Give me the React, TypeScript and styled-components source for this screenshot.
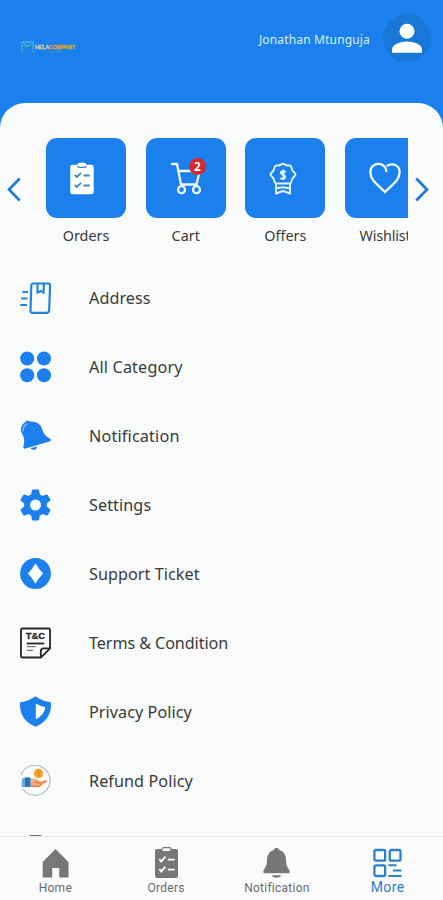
import React from "react";
import styled, { createGlobalStyle } from "styled-components";

const BLUE = "#1b7fee";
const PAPER = "#f9fafa";

const GlobalStyle = createGlobalStyle`
  * { box-sizing: border-box; }
  body { margin: 0; background: ${PAPER}; }
`;

const Screen = styled.div`
  width: 443px;
  height: 900px;
  overflow: hidden;
  display: flex;
  flex-direction: column;
  background: ${BLUE};
  font-family: "Noto Sans", "Open Sans", sans-serif;
  color: #3a3a3a;
`;

const Header = styled.header`
  height: 103px;
  flex: none;
  display: flex;
  align-items: flex-start;
  justify-content: space-between;
  padding: 14px 12px 0 21px;
`;

const Brand = styled.div`
  display: flex;
  align-items: center;
  gap: 1px;
  margin-top: 27px;
`;

const BrandText = styled.div`
  display: flex;
  flex-direction: column;
  align-items: center;
  gap: 1px;
  padding-top: 2px;
  font-family: "Liberation Sans", sans-serif;
  line-height: 1;
`;

const BrandName = styled.span`
  font-size: 5.4px;
  font-weight: 700;
  color: #dba52c;
  -webkit-text-stroke: 0.3px currentColor;
  letter-spacing: -0.16px;
  height: 5px;
  em { font-style: normal; color: #cfcf9f; }
`;

const BrandSub = styled.span`
  font-size: 3px;
  height: 3px;
  color: #4f96a0;
  letter-spacing: 0.9px;
`;

const User = styled.div`
  display: flex;
  align-items: flex-start;
  gap: 13px;
`;

const UserName = styled.span`
  margin-top: 17px;
  font-size: 12px;
  line-height: 17px;
  letter-spacing: 0.16px;
  color: #d9f0fd;
  white-space: nowrap;
`;

const Avatar = styled.div`
  width: 48px;
  height: 48px;
  border-radius: 50%;
  background: #1977d7;
  display: grid;
  place-items: center;
`;

const Sheet = styled.main`
  flex: 1;
  min-height: 0;
  overflow: hidden;
  border-radius: 25px 25px 0 0;
  background: ${PAPER};
  display: flex;
  flex-direction: column;
`;

const Carousel = styled.section`
  flex: none;
  display: flex;
  align-items: flex-start;
  padding: 35px 0 0 7px;
  height: 160px;
`;

const ArrowButton = styled.button`
  border: 0;
  padding: 0;
  background: none;
  width: 14px;
  height: 25px;
  margin-top: 39px;
  flex: none;
`;

const Track = styled.div`
  width: 362px;
  margin: 0 7px 0 25px;
  overflow: hidden;
  display: flex;
  gap: 19.7px;
`;

const TileItem = styled.div`
  flex: none;
  width: 80px;
  display: flex;
  flex-direction: column;
  align-items: center;
`;

const Tile = styled.div<{ $iconInset?: number }>`
  position: relative;
  width: 80px;
  height: 80px;
  border-radius: 11px;
  background: ${BLUE};
  display: grid;
  place-items: center;
  padding-right: ${(p) => p.$iconInset ?? 0}px;
`;

const Badge = styled.span`
  position: absolute;
  top: 20px;
  left: 43px;
  width: 17px;
  height: 17px;
  border-radius: 50%;
  background: #d9282c;
  color: #fff;
  font-size: 11.5px;
  font-weight: 700;
  line-height: 17px;
  text-align: center;
`;

const TileLabel = styled.span<{ $spacing?: number }>`
  margin-top: 8px;
  font-size: 14.4px;
  line-height: 20px;
  letter-spacing: ${(p) => p.$spacing ?? 0}px;
  white-space: nowrap;
`;

const Menu = styled.ul`
  list-style: none;
  margin: 0;
  padding: 0;
`;

const MenuRow = styled.li`
  height: 69px;
  padding-left: 20px;
  display: flex;
  align-items: center;
  gap: 38px;
`;

const MenuLabel = styled.span<{ $spacing: number }>`
  margin-top: 1px;
  font-size: 16.2px;
  line-height: 22px;
  letter-spacing: ${(p) => p.$spacing}px;
  white-space: nowrap;
`;

const NextRow = styled.li`
  height: 30px;
  padding: 20px 0 0 29px;
`;

const NextIconTop = styled.div`
  width: 13px;
  height: 12px;
  border-radius: 2px 2px 0 0;
  background: #6f7173;
`;

const BottomNav = styled.nav`
  flex: none;
  height: 64px;
  background: #fbfbfb;
  border-top: 1px solid #eaebeb;
  display: grid;
  grid-template-columns: repeat(4, 1fr);
  font-family: Roboto, sans-serif;
`;

const NavItem = styled.div<{ $active?: boolean }>`
  display: flex;
  flex-direction: column;
  align-items: center;
  padding-top: 10px;
  color: ${(p) => (p.$active ? "#2b80cf" : "#777")};
`;

const NavLabel = styled.span<{ $active?: boolean }>`
  font-size: ${(p) => (p.$active ? 14 : 12)}px;
  line-height: 16px;
  letter-spacing: ${(p) => (p.$active ? 0.35 : 0.25)}px;
  margin-top: ${(p) => (p.$active ? 1 : 2)}px;
  color: ${(p) => (p.$active ? "#2b80cf" : "#6a6a6a")};
`;

const Icon = styled.svg`
  display: block;
  flex: none;
`;

const Chevron = ({ flip }: { flip?: boolean }) => (
  <Icon width="14" height="25" viewBox="0 0 14 25" fill="none" stroke="#1a78d6" strokeWidth="2.6">
    <path d={flip ? "M1.300 1.500 12 12.500 1.300 23.500" : "M12.700 1.500 2 12.500 12.700 23.500"} />
  </Icon>
);

const BrandMark = () => (
  <Icon width="13" height="14" viewBox="0 0 13 14" fill="none">
    <path d="M1 13V1.200h11V12" stroke="#50b7da" strokeWidth="1.200" />
    <path d="M1.200 8v5M3 3.500 6.500 7.500 10.500 3.300M4.500 9v2.500M11.700 8v4.500" stroke="#3397aa" strokeWidth="1.200" />
    <path d="M3.200 2.800c2 2.800 4.400 2.800 6.600 0" stroke="#66c5e4" strokeWidth="1" />
  </Icon>
);

const PersonIcon = () => (
  <Icon width="30" height="30" viewBox="0 0 30 30" fill="#fff">
    <circle cx="15" cy="8.200" r="7.500" />
    <path d="M0 29.700v-3.200c0-5.200 8.500-8 15-8s15 2.800 15 8v3.200z" />
  </Icon>
);

const ClipboardIcon = ({ color, mark }: { color: string; mark: string }) => (
  <Icon width="24" height="33" viewBox="0 0 24 33">
    <path d="M2.500 2.800h5Q8 .8 10 .8h4q2 0 2.500 2h5Q23.700 2.800 23.700 5v25q0 2.300-2.200 2.300h-19Q.3 32.300.3 30V5q0-2.200 2.200-2.200z" fill={color} />
    <path d="M7.600 4q.5 1.300 1.800 1.300h5.200q1.300 0 1.800-1.300" fill="none" stroke={mark} strokeWidth="1.300" />
    <path d="m4.800 13 2 2 4.300-4.200M4.800 23l2 2 4.300-4.200M13.500 13.500h6.300M13.500 23.500h6.300" fill="none" stroke={mark} strokeWidth="1.800" />
  </Icon>
);

const NavClipboardIcon = () => (
  <Icon width="23" height="31" viewBox="0 0 23 31">
    <rect y="2" width="23" height="29" rx="2" fill="#777" />
    <rect x="7" y=".6" width="9" height="4" rx="1.500" fill="#fbfbfb" stroke="#777" strokeWidth="1.200" />
    <path d="m4.300 12 2 2.500 4-4.800M4.300 22l2 2.500 4-4.800M12.800 12.600h6.800M12.800 22.600h6.800" fill="none" stroke="#fff" strokeWidth="1.900" />
  </Icon>
);

const CartIcon = () => (
  <Icon width="32" height="33" viewBox="0 0 32 33" fill="none" stroke="#eefaff" strokeWidth="2.300" strokeLinejoin="round">
    <path d="M1 2h6l4 20.500h15.500l3.200-13.500H8.500" />
    <circle cx="11.500" cy="27.700" r="3.500" />
    <circle cx="26.500" cy="27.700" r="3.500" />
  </Icon>
);

const OfferIcon = () => (
  <Icon width="28" height="33" viewBox="0 0 28 33" fill="none" stroke="#e4f5ff" strokeWidth="1.900" strokeLinejoin="round">
    <path d="M7.500 3.500q3 .3 5-1.300 1.500-1 3 0 2 1.600 5 1.300 1.800.2 2 2.200.2 2.800 3.200 5.300 1.500 1.500 0 3-3 2.500-3.200 5.300-.2 2-2 2.200h-13q-1.800-.2-2-2.200Q5.300 16.500 2.300 14q-1.500-1.500 0-3 3-2.500 3.200-5.300.2-2 2-2.200z" />
    <path d="M7 22v9.500l7-2.500 7 2.500V22M7.500 26.300l6.500-1 6.500 1" />
    <path d="M17 10q-3-1.500-5 0c-1.500 2.500 4.700 2.500 4.300 5.200-1 2.300-3.600 2-5 .6M14.500 7.500v10.500" strokeWidth="1.900" />
  </Icon>
);

const HeartIcon = () => (
  <Icon width="32" height="32" viewBox="0 0 32 32" fill="none" stroke="#f0faff" strokeWidth="2.300" strokeLinecap="round">
    <path d="M17.300 9.200C17.200 6.800 15.800 4.200 13.500 2.900 8 .2 1.400 3.500 1.400 10.200 1.400 18 8 22 16 30 24 22 30.600 18 30.600 10.200 30.600 3.500 24.500.5 18.500 3.500" />
  </Icon>
);

const AddressIcon = () => (
  <Icon width="31" height="32" viewBox="0 0 31 32" fill="none" stroke="#2484d9" strokeWidth="2.200">
    <path d="M13.500 1.500h14.800q2 0 1.800 2l-1 25q-.2 2.300-2.300 2.300H12.500q-2.200 0-2-2.300l.8-25q.1-2 2.200-2z" />
    <path d="M17.500 2v8.500l3.300-1.600 2.700 1.600.4-8.500M2.500 10H8M1 16.500h6.500M.3 23H7" />
  </Icon>
);

const CategoryIcon = () => (
  <Icon width="31" height="32" viewBox="0 0 31 32" fill={BLUE}>
    <circle cx="7.200" cy="7.500" r="7" />
    <circle cx="24" cy="7.500" r="7" />
    <circle cx="7.200" cy="24.300" r="7" />
    <circle cx="24" cy="24.300" r="7" />
  </Icon>
);

const TiltedBellIcon = () => (
  <Icon width="31" height="31" viewBox="0 0 31 31" fill={BLUE}>
    <path d="M5.500 2Q6.500-.6 9.300 1.500q9.500-1 12.700 7c1 4.500 3 7.500 8.500 10.500.8 1.200.4 2-1 2.500L5.400 28.500c-1.800.4-2.200-.3-2-2 1.800-7 .4-9.800-1.600-13Q-1 6 5.500 2z" />
    <path d="M10.500 28.300 17 26.400q-.2 3-3 3.300-2.500.3-3.500-1.400z" />
    <path d="M3.200 11.500Q2.500 5.700 7.800 3.600" fill="none" stroke="#87beee" strokeWidth="1.200" />
  </Icon>
);

const GearIcon = () => (
  <Icon width="31" height="32" viewBox="0 0 31 32">
    <g fill={BLUE}>
      <circle cx="15.500" cy="16" r="11.300" />
      {[0, 60, 120, 180, 240, 300].map((angle) => (
        <path key={angle} d="M10.800 7 12 1.200q.2-.8 1-.8h5q.8 0 1 .8L20.200 7z" transform={`rotate(${angle} 15.500 16)`} />
      ))}
    </g>
    <circle cx="15.500" cy="16" r="5.500" fill={PAPER} />
  </Icon>
);

const SupportIcon = () => (
  <Icon width="31" height="31" viewBox="0 0 31 31">
    <circle cx="15.500" cy="15.500" r="15.400" fill={BLUE} />
    <path d="M15.500 5.800Q18 10.500 22.700 15.500 18 20.500 15.500 25.200 13 20.500 8.300 15.500 13 10.500 15.500 5.800z" fill="#fff" stroke="#fff" strokeWidth=".6" />
  </Icon>
);

const TermsIcon = () => (
  <Icon width="31" height="32" viewBox="0 0 32 32" fill="none" stroke="#292929" strokeWidth="1.900" strokeLinejoin="round">
    <path d="M2.500 1h27Q31 1 31 2.500V21.500L21.500 31h-19Q1 31 1 29.500v-27Q1 1 2.500 1zM31 21.500h-6.500q-3 0-3 3V31" />
    <path d="M7 16.500h18" />
    <path d="M7 19.800h9M7 23.500h6.500" stroke="#777" strokeWidth="1.300" />
    <text x="16" y="12.300" textAnchor="middle" textLength="20" lengthAdjust="spacingAndGlyphs" fontFamily="Liberation Sans, sans-serif" fontSize="9.200" fontWeight="700" fill="#292929" stroke="#292929" strokeWidth=".3">T&amp;C</text>
  </Icon>
);

const ShieldIcon = () => (
  <Icon width="31" height="31" viewBox="0 0 31 31">
    <path d="M15.500.3Q22 5.200 30.800 6.300 32.500 23.500 15.500 30.800-1.500 23.500.2 6.300 9 5.200 15.500.3z" fill={BLUE} />
    <path d="M15.800 7.500q4.500 2.500 9.500 3.800-1 8-9.500 12z" fill="#fff" />
  </Icon>
);

const RefundIcon = () => (
  <Icon width="31" height="32" viewBox="0 0 31 32">
    <path d="M1 10A15 15 0 1 1 2.500 23.500" fill="none" stroke="#b5bcc5" strokeWidth="1.200" />
    <circle cx="18.500" cy="8.500" r="4.700" fill="#f7a329" />
    <path d="M18.500 5.500v6M17 7h3" stroke="#d88518" strokeWidth="1" />
    <path d="M10.500 13.500h5l4 2.300q2 .2 2.300 1.300l4.500-1.700q1.800.2.700 1.700L18.500 21.800h-8z" fill="#f4ae82" />
    <path d="m15 17.300 5.500.8 5.800-2.300M11 21.300h7.500l3.500-2" fill="none" stroke="#e77f43" strokeWidth="1.500" />
    <path d="M5 12.500h5.500v9.500H4.500z" fill="#2675b9" />
    <path d="M2 14q2-2 3-1.500V22H1.500z" fill="#69a9dc" />
  </Icon>
);

const HomeIcon = () => (
  <Icon width="27" height="31" viewBox="0 0 27 31">
    <path d="M13.500 2 26.500 15v15.500h-9.300V21h-7v9.500H.7V15z" fill="#777" />
  </Icon>
);

const BellIcon = () => (
  <Icon width="27" height="31" viewBox="0 0 27 31" fill="#777">
    <path d="M11 2.800Q11.500.8 13.500.8q2 0 2.500 2 7 2.200 7 10 0 6.500 2.800 9.400 1 1.500.9 2.800-.2 1.200-1.400 1.200H1.700Q.5 26.200.3 25q-.1-1.300.9-2.800Q4 19.300 4 12.800 4 5 11 2.800z" />
    <path d="M8.500 28.200h10q-1.500 2.500-5 2.500t-5-2.500z" />
  </Icon>
);

const MoreIcon = () => (
  <Icon width="29" height="31" viewBox="0 0 29 31" fill="none" stroke="#2b80cf" strokeWidth="2.300">
    <rect x="1.400" y="3" width="10.700" height="10.700" rx="1.500" />
    <rect x="16.800" y="3" width="10.700" height="10.700" rx="1.500" />
    <rect x="1.400" y="18.300" width="10.700" height="10.700" rx="1.500" />
    <path d="M15.500 18.300h8M20 23.500h8.500M15.500 29h13" strokeWidth="2" />
  </Icon>
);

const tiles = [
  { label: "Orders", icon: <ClipboardIcon color="#fff" mark="#3f87b5" />, inset: 8 },
  { label: "Cart", icon: <CartIcon />, badge: 2 },
  { label: "Offers", icon: <OfferIcon />, inset: 4 },
  { label: "Wishlist", icon: <HeartIcon />, spacing: -0.15 },
];

const menu = [
  { label: "Address", spacing: 0.05, icon: <AddressIcon /> },
  { label: "All Category", spacing: 0.15, icon: <CategoryIcon /> },
  { label: "Notification", spacing: 0.17, icon: <TiltedBellIcon /> },
  { label: "Settings", spacing: 0.08, icon: <GearIcon /> },
  { label: "Support Ticket", spacing: 0.05, icon: <SupportIcon /> },
  { label: "Terms & Condition", spacing: -0.1, icon: <TermsIcon /> },
  { label: "Privacy Policy", spacing: 0.05, icon: <ShieldIcon /> },
  { label: "Refund Policy", spacing: 0.07, icon: <RefundIcon /> },
];

const navItems = [
  { label: "Home", icon: <HomeIcon /> },
  { label: "Orders", icon: <NavClipboardIcon /> },
  { label: "Notification", icon: <BellIcon /> },
  { label: "More", icon: <MoreIcon />, active: true },
];

export default function App() {
  return (
    <>
      <GlobalStyle />
      <Screen>
        <Header>
          <Brand>
            <BrandMark />
            <BrandText>
              <BrandName><em>HELA</em>COMPANY</BrandName>
              <BrandSub>ONLINE</BrandSub>
            </BrandText>
          </Brand>
          <User>
            <UserName>Jonathan Mtunguja</UserName>
            <Avatar><PersonIcon /></Avatar>
          </User>
        </Header>
        <Sheet>
          <Carousel>
            <ArrowButton aria-label="Previous"><Chevron /></ArrowButton>
            <Track>
              {tiles.map((t) => (
                <TileItem key={t.label}>
                  <Tile $iconInset={t.inset}>
                    {t.icon}
                    {t.badge && <Badge>{t.badge}</Badge>}
                  </Tile>
                  <TileLabel $spacing={t.spacing}>{t.label}</TileLabel>
                </TileItem>
              ))}
            </Track>
            <ArrowButton aria-label="Next"><Chevron flip /></ArrowButton>
          </Carousel>
          <Menu>
            {menu.map((m) => (
              <MenuRow key={m.label}>
                {m.icon}
                <MenuLabel $spacing={m.spacing}>{m.label}</MenuLabel>
              </MenuRow>
            ))}
            <NextRow><NextIconTop /></NextRow>
          </Menu>
        </Sheet>
        <BottomNav>
          {navItems.map((n) => (
            <NavItem key={n.label} $active={n.active}>
              {n.icon}
              <NavLabel $active={n.active}>{n.label}</NavLabel>
            </NavItem>
          ))}
        </BottomNav>
      </Screen>
    </>
  );
}
